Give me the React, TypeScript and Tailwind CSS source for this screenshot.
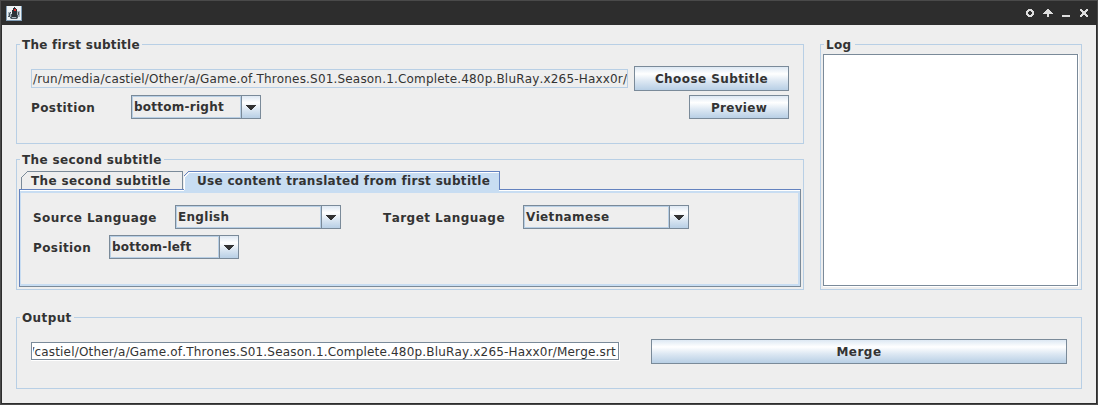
import React from "react";

function Label({ children, className = "" }: { children: React.ReactNode; className?: string }) {
  return <span className={`block whitespace-nowrap leading-[15px] ${className}`}>{children}</span>;
}

function Group({ title, titleClass, className, children }: { title: string; titleClass: string; className: string; children: React.ReactNode }) {
  return (
    <section className={`relative border border-[#b8cfe5] ${className}`}>
      <h2 className={`absolute -top-[7px] left-[3px] h-[15px] whitespace-nowrap bg-[#eeeeee] pl-[2px] leading-[15px] ${titleClass}`}>{title}</h2>
      {children}
    </section>
  );
}

const gradient = "bg-[linear-gradient(180deg,#dde8f3_0%,#ffffff_30%,#dde8f3_60%,#b8cfe5_100%)]";

function Button({ className, children }: { className: string; children: React.ReactNode }) {
  return (
    <button className={`flex items-start justify-center whitespace-nowrap border border-[#7a8a99] pt-[5px] leading-[15px] ${gradient} ${className}`}>
      {children}
    </button>
  );
}

function Combo({ value, className, textClass }: { value: string; className: string; textClass: string }) {
  return (
    <div className={`flex h-6 border border-[#7a8a99] ${className}`}>
      <div className="flex-1 border border-[#b8cfe5] pl-px pt-[3px]">
        <Label className={textClass}>{value}</Label>
      </div>
      <div className={`flex w-[19px] border-l border-[#7a8a99] pl-1 pt-[9px] ${gradient}`}>
        <svg width="10" height="5" viewBox="0 0 10 5" shapeRendering="crispEdges" fill="#333333">
          <path d="M0 0h10v1H9v1H8v1H7v1H6v1H4V4H3V3H2V2H1V1H0z" />
        </svg>
      </div>
    </div>
  );
}

function TitleBar() {
  return (
    <header className="flex h-6 items-start justify-between bg-[#2d2d2d] pl-[4px] pr-[7px] pt-[5px]">
      <svg width="16" height="15" viewBox="0 0 16 15" shapeRendering="crispEdges">
        <path fill="#7f9cb5" d="M0 0h16v15H0z" />
        <path fill="#edf2f5" d="M1 0h14v14H1z" />
        <path fill="#a9b6bf" d="M2 6h3v5H2zM11 5h3v6h-3zM4 11h8v2H4z" />
        <path fill="#2c3338" d="M8 1h1v1h1v1h1v8H6V4h1V2h1z" />
        <path fill="#4b565e" d="M4 6h1v1H4zM3 7h1v3H3zM5 8h1v3H5zM12 6h1v3h-1zM11 9h1v2h-1zM2 10h2v1H2zM4 11h2v1H4zM10 11h2v1h-2zM5 12h6v1H5z" />
        <path fill="#e32b2b" d="M8 3h2v2H8z" />
      </svg>
      <svg className="mt-[3px]" width="63" height="9" viewBox="0 0 63 9" shapeRendering="crispEdges" fill="#dedede">
        <path fillRule="evenodd" d="M2 0h4v1h1v1h1v4H7v1H6v1H2V7H1V6H0V2h1V1h1zM3 2v1H2v2h1v1h2V5h1V3H5V2z" />
        <path d="M21 0h2v1h1v1h1v1h1v1h1v1h-4v3h-2V5h-4V4h1V3h1V2h1V1h1z" />
        <path d="M36 6h8v2h-8z" />
        <path d="M54 0h2v1h1v1h2V1h1V0h2v2h-1v1h-1v2h1v1h1v2h-2V7h-1V6h-2v1h-1v1h-2V6h1V5h1V3h-1V2h-1z" />
      </svg>
    </header>
  );
}

export default function App() {
  return (
    <div className="h-[405px] w-[1098px] overflow-hidden border border-[#4a4a4a] bg-[#2d2d2d] px-px pb-px font-['DejaVu_Sans',sans-serif] text-[12px] font-bold text-[#333333] [font-kerning:none]">
      <TitleBar />
      <main className="flex h-[378px] flex-col bg-[#eeeeee] pl-[14px] pr-[14px] pt-[19px]">
        <div className="flex h-[246px] gap-4">
          <div className="flex w-[788px] flex-col gap-[15px]">
            <Group title="The first subtitle" titleClass="w-[122px] tracking-[0.24px]" className="h-[100px] px-[14px] pt-[21px]">
              <div className="flex items-start gap-[6px]">
                <div className="mt-[3px] h-[19px] w-[597px] overflow-hidden border border-[#b8cfe5] pl-px pt-[2px]">
                  <Label className="font-normal tracking-[0.18px]">/run/media/castiel/Other/a/Game.of.Thrones.S01.Season.1.Complete.480p.BluRay.x265-Haxx0r/</Label>
                </div>
                <Button className="h-[25px] w-[155px] tracking-[0.42px]">Choose Subtitle</Button>
              </div>
              <div className="mt-1 flex h-6 items-start">
                <Label className="w-[100px] pt-[6px] tracking-[0.4px]">Postition</Label>
                <Combo value="bottom-right" className="w-[130px]" textClass="tracking-[0.25px]" />
                <Button className="ml-auto h-6 w-[100px] tracking-[0.3px]">Preview</Button>
              </div>
            </Group>
            <Group title="The second subtitle" titleClass="w-[144px] tracking-[0.35px]" className="h-[131px] px-[2px] pt-[11px]">
              <div className="relative z-10 flex h-[18px] pl-[2px]">
                <div className="relative w-[162px] pl-[10px] pt-[3px]">
                  <svg className="absolute left-0 top-0" width="162" height="18" shapeRendering="crispEdges" fill="none" stroke="#7a8a99">
                    <path d="M.5 18V6.5L6.5.5H161.5V18" />
                  </svg>
                  <Label className="relative tracking-[0.35px]">The second subtitle</Label>
                </div>
                <div className="relative h-[22px] w-[317px] pl-[14px] pt-[3px]">
                  <svg className="absolute left-0 top-0" width="317" height="22" shapeRendering="crispEdges">
                    <path fill="#c8ddf2" d="M1 6L6 1h310v21H1z" />
                    <path fill="none" stroke="#fff" d="M1.5 19V6.5L6.5 1.5H316" />
                    <path fill="none" stroke="#6382bf" d="M.5 5.5L5.5.5H316.5V19" />
                  </svg>
                  <Label className="relative tracking-[0.31px]">Use content translated from first subtitle</Label>
                </div>
              </div>
              <div className="h-[98px] w-[782px] border border-[#7a8a99] border-l-[#6382bf] border-t-[#6382bf]">
                <div className="h-full border-t border-white">
                  <div className="h-full border-2 border-l border-[#c8ddf2] pl-3 pt-3">
                    <div className="flex h-6 items-start">
                      <Label className="w-[142px] pt-[6px] tracking-[0.46px]">Source Language</Label>
                      <Combo value="English" className="w-[166px]" textClass="tracking-[0.3px]" />
                      <Label className="ml-[42px] w-[140px] pt-[6px] tracking-[0.46px]">Target Language</Label>
                      <Combo value="Vietnamese" className="w-[166px]" textClass="tracking-[0.36px]" />
                    </div>
                    <div className="mt-[6px] flex h-6 items-start">
                      <Label className="w-[76px] pt-[6px] tracking-[0.4px]">Position</Label>
                      <Combo value="bottom-left" className="w-[130px]" textClass="tracking-[0.2px]" />
                    </div>
                  </div>
                </div>
              </div>
            </Group>
          </div>
          <Group title="Log" titleClass="w-[31px] tracking-[0.3px]" className="w-[262px] px-[2px] pt-[9px]">
            <div className="h-[233px] w-[256px] border-b border-r border-white">
              <div className="h-full border border-[#7a8a99] bg-white" />
            </div>
          </Group>
        </div>
        <Group title="Output" titleClass="w-[54px] tracking-[0.4px]" className="mt-[27px] flex h-[72px] w-[1066px] gap-[31px] pl-[14px] pt-[21px]">
          <div className="mt-[3px] h-[19px] w-[589px] border-b border-r border-white">
            <div className="h-full border border-[#7a8a99] bg-white pl-px pr-[2px]">
              <div className="flex h-full justify-end overflow-hidden pt-[2px]">
                <Label className="font-normal tracking-[0.18px]">/castiel/Other/a/Game.of.Thrones.S01.Season.1.Complete.480p.BluRay.x265-Haxx0r/Merge.srt</Label>
              </div>
            </div>
          </div>
          <Button className="h-[25px] w-[416px] tracking-[0.5px]">Merge</Button>
        </Group>
      </main>
    </div>
  );
}
